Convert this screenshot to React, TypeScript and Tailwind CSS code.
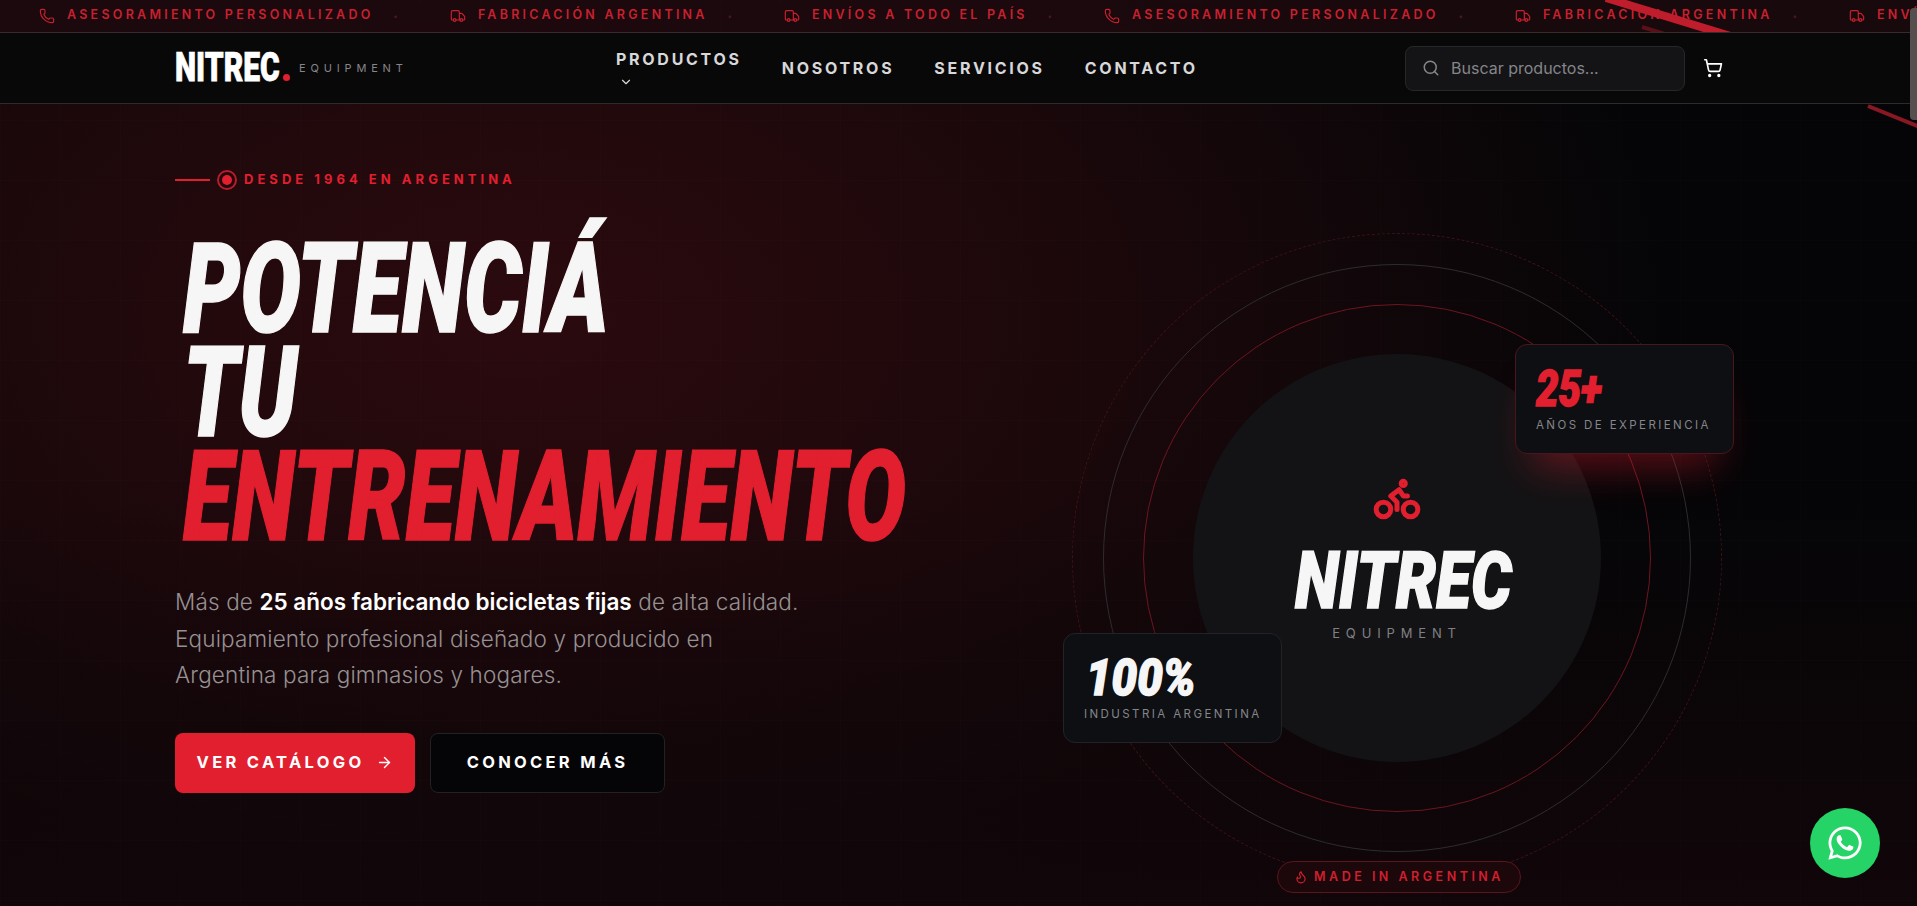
import { ArrowRight, Bike, ChevronDown, Flame, Phone, Search, ShoppingCart, Truck } from "lucide-react";
import { FaWhatsapp } from "react-icons/fa";

const heavy = "font-['Roboto',sans-serif] font-black italic [-webkit-text-stroke:1.5px_currentColor]";

function TickerItem({ phone, children }: { phone?: boolean; children: string }) {
  return (
    <div className="flex shrink-0 items-center gap-[12px] pr-[49px]">
      {phone ? <Phone size={16} strokeWidth={1.75} /> : <Truck size={16} strokeWidth={1.75} />}
      <span className="whitespace-nowrap">{children}</span>
      <span className="ml-[8px] text-[8px] text-[#4a1a20]">•</span>
    </div>
  );
}

function StatCard({ value, label, valueClass, className }: { value: string; label: string; valueClass: string; className: string }) {
  return (
    <div className={`absolute z-20 flex h-[110px] w-[219px] flex-col rounded-xl border bg-[#0e0f12] pt-[22px] pl-[20px] ${className}`}>
      <div className={`h-[45px] w-[190px] origin-left text-[50px] leading-[45px] ${heavy} ${valueClass}`}>{value}</div>
      <div className="mt-[5px] text-[11.5px] tracking-[0.21em] whitespace-nowrap text-[#85858a]">{label}</div>
    </div>
  );
}

export default function App() {
  const ticker = (
    <>
      <TickerItem phone>ASESORAMIENTO PERSONALIZADO</TickerItem>
      <TickerItem>FABRICACIÓN ARGENTINA</TickerItem>
      <TickerItem>ENVÍOS A TODO EL PAÍS</TickerItem>
    </>
  );

  return (
    <main className="relative h-[906px] overflow-hidden bg-[#050507] font-['Inter',sans-serif] text-white">
      {/* background washes and grid */}
      <div className="absolute inset-0 bg-[radial-gradient(ellipse_1150px_720px_at_520px_320px,#2b0a0e_0%,#1b080b_50%,transparent_100%)]" />
      <div className="absolute inset-0 bg-[linear-gradient(to_top,#110609_0%,transparent_45%)]" />
      <div className="absolute inset-0 bg-[linear-gradient(to_right,rgba(255,255,255,0.008)_1px,transparent_1px),linear-gradient(to_bottom,rgba(255,255,255,0.008)_1px,transparent_1px)] bg-[size:60px_60px]" />
      <div className="absolute top-[104px] left-[1868px] h-[4px] w-[55px] origin-left rotate-[22deg] bg-[#8a1823]" />

      <div className="relative z-10 flex h-[33px] items-center overflow-hidden border-b border-[#3a2a2d] bg-[#1d0a0e]/80 pb-[1px] pl-[39px] text-[12.5px] font-semibold tracking-[0.26em] text-[#c8202f]">
        {ticker}
        {ticker}
        {/* red streaks crossing the ticker */}
        <div className="absolute top-[-6px] left-[1606px] h-[8px] w-[135px] origin-left rotate-[17deg] bg-[#c01d2c]" />
        <div className="absolute top-[25px] left-[1642px] h-[4px] w-[40px] origin-left rotate-[17deg] bg-[#5a1019]" />
      </div>

      <header className="relative z-10 flex h-[71px] items-center border-b border-[#2b2b2e] bg-[#08080a]/95 pr-[194px] pl-[175px]">
        <div className="flex w-[441px] items-center">
          <div className="flex h-[40px] w-[110px] items-center">
            <span className="origin-left scale-x-[0.75] font-['Roboto',sans-serif] text-[40px] leading-[40px] font-black whitespace-nowrap [-webkit-text-stroke:0.75px_currentColor]">
              NITREC
            </span>
            <span className="mt-[18px] -ml-[32px] h-[7px] w-[7px] shrink-0 rounded-full bg-[#e21f2f]" />
          </div>
          <span className="ml-[14px] text-[11px] tracking-[0.44em] text-[#85858a]">EQUIPMENT</span>
        </div>
        <nav className="flex flex-1 items-center gap-[40px] text-[16px] font-bold tracking-[0.17em] text-[#d8d8da]">
          <div className="flex flex-col">
            <span>PRODUCTOS</span>
            <ChevronDown size={14} className="mt-[4px] ml-[3px]" />
          </div>
          <span>NOSOTROS</span>
          <span>SERVICIOS</span>
          <span>CONTACTO</span>
        </nav>
        <div className="flex h-[45px] w-[280px] items-center gap-[11px] rounded-lg border border-[#27272a] bg-[#141416] pl-[16px] text-[16px] text-[#85858a]">
          <Search size={18} />
          Buscar productos...
        </div>
        <ShoppingCart size={20} className="ml-[18px] text-white" />
      </header>

      <section className="relative flex pl-[175px]">
        <div className="w-[897px] pt-[66px]">
          <div className="flex h-[20px] items-center text-[13px] font-bold tracking-[0.31em] text-[#e21f2f]">
            <span className="h-[2px] w-[35px] bg-[#e21f2f]" />
            <svg width="20" height="20" viewBox="0 0 20 20" className="mx-[7px]">
              <circle cx="10" cy="10" r="9" fill="none" stroke="#b81c2b" strokeWidth="2" />
              <circle cx="10" cy="10" r="5" fill="#e21f2f" />
            </svg>
            DESDE 1964 EN ARGENTINA
          </div>

          <h1 className={`mt-[47px] ml-[8px] text-[126px] leading-[104px] whitespace-nowrap ${heavy}`}>
            <span className="block origin-left scale-x-[0.72] text-[#f6f6f6]">POTENCIÁ</span>
            <span className="block origin-left scale-x-[0.72] text-[#f6f6f6]">TU</span>
            <span className="block origin-left scale-x-[0.72] text-[#e21f2f]">ENTRENAMIENTO</span>
          </h1>

          <p className="mt-[35px] text-[22.5px] leading-[36.5px] font-light tracking-[0.15px] text-[#969192]">
            Más de <strong className="font-semibold tracking-normal text-white">25 años fabricando bicicletas fijas</strong> de alta calidad.
            <br />
            Equipamiento profesional diseñado y producido en
            <br />
            Argentina para gimnasios y hogares.
          </p>

          <div className="mt-[39px] flex gap-[15px] text-[16.5px] font-bold tracking-[0.2em]">
            <button className="flex h-[60px] w-[240px] items-center justify-center gap-[12px] rounded-lg bg-[#e21f2f]">
              VER CATÁLOGO <ArrowRight size={17} />
            </button>
            <button className="h-[60px] w-[235px] rounded-lg border border-[#222] bg-[#050507]">CONOCER MÁS</button>
          </div>
        </div>

        {/* rings */}
        <div className="relative mt-[129px] h-[650px] w-[650px] rounded-full border border-dashed border-[#3f1218]">
          <div className="absolute inset-[30px] rounded-full border border-[#2c2c30]" />
          <div className="absolute inset-[70px] rounded-full border border-[#6d1520]" />
          <div className="absolute inset-[120px] flex flex-col items-center rounded-full bg-[#131315] pt-[119px]">
            <Bike size={50} strokeWidth={2.4} className="text-[#e21f2f]" />
            <div className={`mt-[20px] ml-[12px] scale-x-[0.8] text-[80px] leading-[76px] text-[#f6f6f6] ${heavy}`}>NITREC</div>
            <div className="mt-[5px] text-[13px] tracking-[0.45em] text-[#808084]">EQUIPMENT</div>
          </div>

          <StatCard
            value="25+"
            label="AÑOS DE EXPERIENCIA"
            valueClass="scale-x-[0.8] text-[#e21f2f]"
            className="top-[110px] left-[442px] border-[#4a161d] shadow-[0_30px_40px_-18px_rgba(226,31,47,0.4)]"
          />
          <StatCard
            value="100%"
            label="INDUSTRIA ARGENTINA"
            valueClass="ml-[2px] scale-x-[0.91] text-[#f6f6f6]"
            className="top-[399px] left-[-10px] border-[#222327]"
          />

          <div className="absolute top-[627px] left-[204px] flex h-[32px] w-[244px] items-center justify-center gap-[6px] rounded-full border border-[#5a151d] bg-[#1c080b] text-[12.5px] font-semibold tracking-[0.28em] text-[#d11f2e]">
            <Flame size={14} />
            MADE IN ARGENTINA
          </div>
        </div>
      </section>

      <div className="absolute right-[37px] bottom-[28px] z-20 flex h-[70px] w-[70px] items-center justify-center rounded-full bg-[#25d366]">
        <FaWhatsapp size={38} className="text-white" />
      </div>

      {/* page scrollbar thumb */}
      <div className="absolute top-[8px] right-0 z-20 h-[112px] w-[7px] rounded-l-sm bg-[#55504f]" />
    </main>
  );
}
